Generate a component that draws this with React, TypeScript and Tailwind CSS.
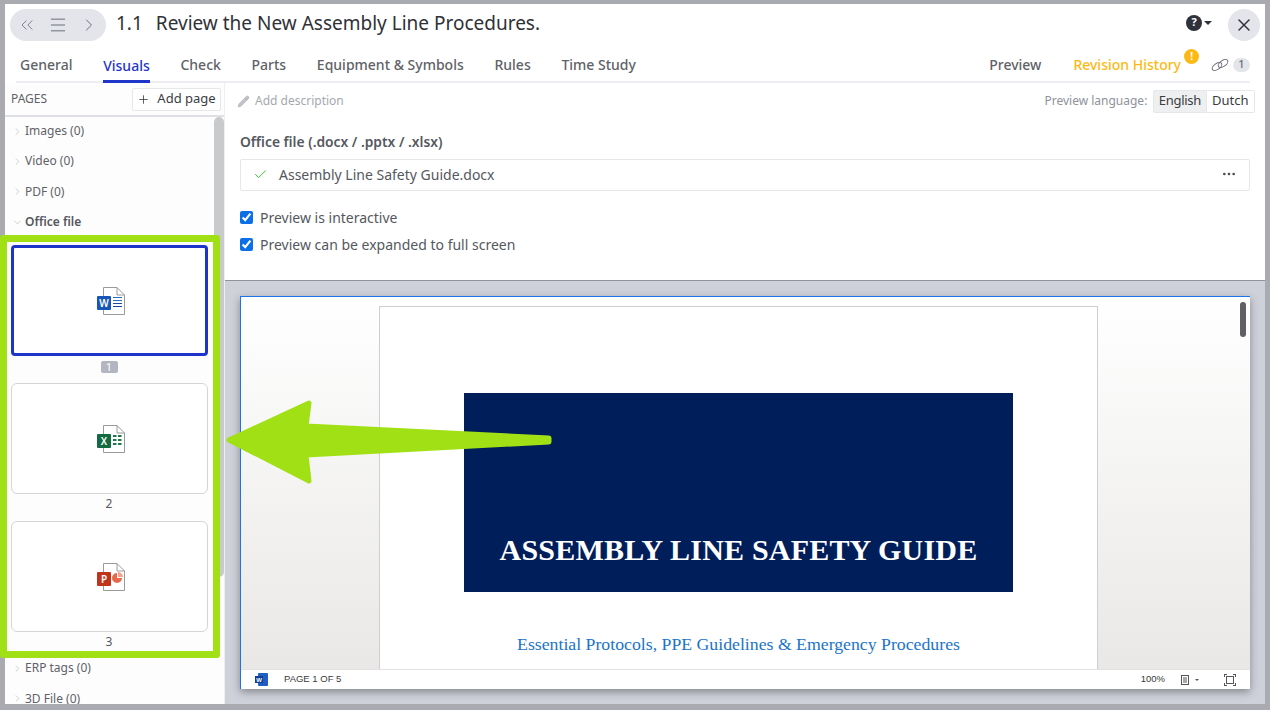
import { Check, ChevronDown, ChevronRight, ChevronsLeft, Menu, MoreHorizontal, Pencil, Plus, X } from "lucide-react";

const TABS = ["General", "Visuals", "Check", "Parts", "Equipment & Symbols", "Rules", "Time Study"];

function FileIcon({ color, letter, kind }: { color: string; letter: string; kind: "word" | "excel" | "ppt" }) {
  return (
    <svg width="30" height="30" viewBox="0 0 30 30" className="ml-[5px]">
      <path d="M6.5 1.5H20L27.5 9V28.5H6.5Z" fill="#fff" stroke="#9a9a9a" />
      <path d="M20 1.5V9H27.5" fill="none" stroke="#9a9a9a" />
      {kind === "word" && (
        <g stroke="#2b6cc4" strokeWidth="1">
          <path d="M16 11.5H25" />
          <path d="M16 14.5H25" />
          <path d="M16 17.5H25" stroke="#1c4a9c" />
          <path d="M16 20.5H25" stroke="#1c4a9c" />
        </g>
      )}
      {kind === "excel" && (
        <g fill="#1e7a4c">
          <rect x="16" y="11" width="3.5" height="2" />
          <rect x="21" y="11" width="3.5" height="2" />
          <rect x="16" y="15" width="3.5" height="2" />
          <rect x="21" y="15" width="3.5" height="2" />
          <rect x="16" y="19" width="3.5" height="2" />
          <rect x="21" y="19" width="3.5" height="2" />
        </g>
      )}
      {kind === "ppt" && (
        <g>
          <path d="M20 11A5 5 0 1 0 25 16H20Z" fill="#e8694a" />
          <path d="M21 10A5 5 0 0 1 26 15H21Z" fill="#f3a48f" />
        </g>
      )}
      <rect x="0" y="10" width="14" height="14" rx="1" fill={color} />
      <text x="7" y="21" textAnchor="middle" fontSize="10" fontWeight="600" fill="#fff" fontFamily="Noto Sans, sans-serif">
        {letter}
      </text>
    </svg>
  );
}

function TreeItem({ label, open, bold }: { label: string; open?: boolean; bold?: boolean }) {
  return (
    <div className="flex h-[30.3px] shrink-0 items-center">
      <span className="flex w-[20px] justify-center pl-[5px] text-[#c9cacd]">
        {open ? <ChevronDown size={11} /> : <ChevronRight size={11} />}
      </span>
      <span className={bold ? "text-[12px] font-semibold text-[#55585e]" : "text-[12px] text-[#5f6268]"}>{label}</span>
    </div>
  );
}

function Thumb({ active, n, children }: { active?: boolean; n: number; children: React.ReactNode }) {
  return (
    <div className="flex flex-col items-center">
      <div
        className={
          active
            ? "flex h-[111px] w-[197px] items-center justify-center rounded-[4px] border-[3px] border-[#1f35c9] bg-white"
            : "flex h-[111px] w-[197px] items-center justify-center rounded-[6px] border border-[#d4d5d8] bg-white"
        }
      >
        {children}
      </div>
      <div className="flex h-[27px] items-start pt-[1px]">
        {active ? (
          <span className="mt-[4px] flex h-[12px] w-[17px] items-center justify-center rounded-[2px] bg-[#b3b6c0] text-[11px] text-white">{n}</span>
        ) : (
          <span className="text-[12px] leading-[18px] text-[#55585e]">{n}</span>
        )}
      </div>
    </div>
  );
}

export default function App() {
  return (
    <div
      className="relative h-[710px] w-[1270px] overflow-hidden bg-[#a9abb0] pt-[4px] pr-[5px] pb-[6px] pl-[5px]"
      style={{ fontFamily: '"Noto Sans", sans-serif' }}
    >
      <div className="flex h-full flex-col bg-white">
        {/* title */}
        <div className="flex h-[40px] shrink-0 items-center pl-[5px] pr-[5px] pt-[2px]">
          <div className="flex h-[32px] w-[96px] items-center justify-between rounded-full bg-[#e3e5ea] px-[7px] text-[#6b6f78]">
            <ChevronsLeft size={20} strokeWidth={1} />
            <Menu size={20} strokeWidth={1.2} />
            <ChevronRight size={20} strokeWidth={1.2} />
          </div>
          <div className="mb-[3px] ml-[10px] text-[19px] leading-none text-[#2f3136]">
            1.1<span className="ml-[13px]">Review the New Assembly Line Procedures.</span>
          </div>
          <div className="ml-auto flex items-center">
            <span className="mb-[5px] flex h-[16px] w-[16px] items-center justify-center rounded-full bg-[#2f323a] text-[11px] font-bold text-white">?</span>
            <span className="mb-[5px] ml-[2px] h-0 w-0 border-x-[4px] border-t-[4px] border-x-transparent border-t-[#2f323a]" />
            <span className="ml-[16px] flex h-[32px] w-[32px] items-center justify-center rounded-full bg-[#e3e5ea] text-[#2f323a]">
              <X size={20} strokeWidth={1.8} />
            </span>
          </div>
        </div>

        {/* tabs */}
        <div className="ml-[11px] mr-[15px] flex h-[39px] shrink-0 items-stretch border-b-[2px] border-[#eceef1] text-[14px] font-medium text-[#5f6268]">
          <div className="flex gap-[30.7px] pl-[4px]">
            {TABS.map((t) => (
              <div
                key={t}
                className={
                  t === "Visuals"
                    ? "-mb-[2px] flex items-center border-b-[3px] border-[#1f35c9] pt-[7px] text-[#1f35c9]"
                    : "flex items-center pt-[4px]"
                }
              >
                {t}
              </div>
            ))}
          </div>
          <div className="relative ml-auto flex items-center pt-[4px]">
            <span>Preview</span>
            <span className="ml-[32px] text-[#fdb913]">Revision History</span>
            <span className="absolute left-[195px] top-[5px] flex h-[15px] w-[15px] items-center justify-center rounded-full bg-[#fdb913] text-[10px] font-bold text-white">!</span>
            <svg width="18" height="14" viewBox="0 0 18 14" fill="none" stroke="#6b6f78" strokeWidth="1" className="ml-[30px]">
              <ellipse cx="6" cy="8.5" rx="5.5" ry="3" transform="rotate(-35 6 8.5)" />
              <ellipse cx="12" cy="5.5" rx="5.5" ry="3" transform="rotate(-35 12 5.5)" />
            </svg>
            <span className="ml-[4px] flex h-[14px] w-[17px] items-center justify-center rounded-full bg-[#e3e5ea] text-[11px] text-[#6b6f78]">1</span>
          </div>
        </div>

        <div className="flex min-h-0 flex-1">
          {/* sidebar */}
          <div className="flex w-[220px] shrink-0 flex-col overflow-hidden border-r border-[#eeeff1] bg-[#fdfdfd]">
            <div className="flex h-[34px] shrink-0 items-center justify-between border-b-2 border-[#dfe0e3] pl-[6px] pr-[3px]">
              <span className="text-[12px] text-[#5f6268]">PAGES</span>
              <span className="flex h-[23px] w-[89px] items-center justify-center gap-[7px] rounded-[2px] border border-[#e6e7ea] bg-white text-[13px] text-[#3a3c42]">
                <Plus size={13} strokeWidth={1.5} />
                Add page
              </span>
            </div>
            <div className="flex min-h-0 flex-1">
              <div className="min-w-0 flex-1 -mt-[1px]">
                <TreeItem label="Images (0)" />
                <TreeItem label="Video (0)" />
                <TreeItem label="PDF (0)" />
                <TreeItem label="Office file" open bold />
                <div className="flex flex-col pl-[1px] pr-[2px] pt-[8px]">
                  <Thumb active n={1}>
                    <FileIcon color="#1a56b8" letter="W" kind="word" />
                  </Thumb>
                  <Thumb n={2}>
                    <FileIcon color="#146b3f" letter="X" kind="excel" />
                  </Thumb>
                  <Thumb n={3}>
                    <FileIcon color="#c2341a" letter="P" kind="ppt" />
                  </Thumb>
                </div>
                <div className="-mt-[6px]">
                  <TreeItem label="ERP tags (0)" />
                  <TreeItem label="3D File (0)" />
                </div>
              </div>
              <div className="w-[10px] shrink-0">
                <div className="h-[460px] w-[10px] rounded-[5px] bg-[#c9cacc]" />
              </div>
            </div>
          </div>

          {/* main */}
          <div className="flex min-w-0 flex-1 flex-col">
            <div className="h-[198px] shrink-0 border-b border-[#8f929a] pl-[15px] pr-[15px]">
              <div className="-mr-[5px] flex h-[36px] items-center justify-between">
                <span className="-ml-[3px] flex items-center gap-[5px] text-[12px] text-[#a5a8ae]">
                  <Pencil size={13} fill="#c2c4c9" strokeWidth={1} />
                  Add description
                </span>
                <span className="flex items-center">
                  <span className="mr-[6px] text-[12px] text-[#8f929a]">Preview language:</span>
                  <span className="flex h-[23px] items-center rounded-l-[2px] border border-[#e6e7ea] bg-[#eeeff0] px-[4.5px] pb-[1px] text-[13px] tracking-[-0.3px] text-[#3a3c42]">English</span>
                  <span className="flex h-[23px] items-center rounded-r-[2px] border border-l-0 border-[#e6e7ea] px-[5.5px] pb-[1px] text-[13px] text-[#3a3c42]">Dutch</span>
                </span>
              </div>
              <div className="mt-[13px] text-[13.8px] font-semibold leading-[20px] text-[#55585e]">Office file (.docx / .pptx / .xlsx)</div>
              <div className="mt-[7px] flex h-[32px] items-center rounded-[2px] border border-[#e6e7ea] pb-[2px] pl-[12px] pr-[12px] text-[14px] text-[#55585e]">
                <Check size={15} strokeWidth={1.5} className="text-[#22c922]" />
                <span className="ml-[11px]">Assembly Line Safety Guide.docx</span>
                <MoreHorizontal size={16} className="ml-auto text-[#4a4c52]" />
              </div>
              <label className="mt-[13px] flex h-[27px] items-center gap-[7px] text-[14px] text-[#55585e]">
                <input type="checkbox" defaultChecked className="h-[13px] w-[13px] accent-[#0b6fe8]" />
                Preview is interactive
              </label>
              <label className="flex h-[27px] items-center gap-[7px] text-[14px] text-[#55585e]">
                <input type="checkbox" defaultChecked className="h-[13px] w-[13px] accent-[#0b6fe8]" />
                Preview can be expanded to full screen
              </label>
            </div>

            {/* preview */}
            <div className="min-h-0 flex-1 bg-[#ced1da] px-[15px] pb-[15px] pt-[15px]">
              <div className="flex h-full flex-col border-l border-t border-[#1b74e8] shadow-[0_3px_8px_rgba(0,0,0,0.35)]">
                <div className="relative flex min-h-0 flex-1 justify-center bg-gradient-to-b from-white to-[#e9e8e6] pr-[14px] pt-[9px]">
                  <div className="flex w-[719px] flex-col items-center border border-b-0 border-[#cfcfcf] bg-white pt-[86px]">
                    <div className="flex h-[199px] w-[549px] items-end justify-center bg-[#001e5a] pb-[27px]">
                      <span
                        className="text-[30px] font-bold leading-none tracking-[0.2px] text-white"
                        style={{ fontFamily: '"Liberation Serif", serif' }}
                      >
                        ASSEMBLY LINE SAFETY GUIDE
                      </span>
                    </div>
                    <div className="mt-[44px] text-[17.75px] leading-none text-[#1b74c8]" style={{ fontFamily: '"Liberation Serif", serif' }}>
                      Essential Protocols, PPE Guidelines &amp; Emergency Procedures
                    </div>
                  </div>
                  <div className="absolute right-[4px] top-[5px] h-[35px] w-[6px] rounded-full bg-[#5f6063]" />
                </div>
                <div
                  className="flex h-[20px] shrink-0 items-center border-t border-[#e2e2e2] bg-white text-[9.5px] text-[#3a3a3a]"
                  style={{ fontFamily: '"Liberation Sans", sans-serif' }}
                >
                  <svg width="13" height="13" viewBox="0 0 13 13" className="ml-[14px]">
                    <rect x="3" y="0" width="10" height="13" rx="1" fill="#1f5fc0" />
                    <rect x="0" y="3" width="8" height="7" fill="#123f96" />
                    <text x="4" y="9" textAnchor="middle" fontSize="6" fill="#fff" fontWeight="700">
                      W
                    </text>
                  </svg>
                  <span className="ml-[16px]">PAGE 1 OF 5</span>
                  <span className="ml-auto">100%</span>
                  <svg width="20" height="12" viewBox="0 0 20 12" className="ml-[15px] text-[#555]">
                    <rect x="1.5" y="1.5" width="7" height="9" fill="none" stroke="currentColor" />
                    <path d="M3 4H7M3 6H7M3 8H7" stroke="currentColor" />
                    <path d="M15 5H19L17 7Z" fill="currentColor" />
                  </svg>
                  <svg width="12" height="12" viewBox="0 0 12 12" className="ml-[24px] mr-[14px] text-[#555]">
                    <rect x="2.5" y="2.5" width="7" height="7" fill="none" stroke="currentColor" />
                    <path d="M0 0H3V1H1V3H0ZM9 0H12V3H11V1H9ZM0 9H1V11H3V12H0ZM11 9H12V12H9V11H11Z" fill="currentColor" />
                  </svg>
                </div>
              </div>
            </div>
          </div>
        </div>
      </div>

      {/* annotation frame and arrow */}
      <div className="absolute left-0 top-[235px] h-[423px] w-[220px] rounded-[3px] border-[7px] border-[#a0e015]" />
      <svg className="absolute left-[225px] top-[398px]" width="330" height="88" viewBox="0 0 330 88">
        <path
          d="M4 42L84 5L81 28L324 40L324 44L81 57L84 83Z"
          fill="#a0e015"
          stroke="#a0e015"
          strokeWidth="5"
          strokeLinejoin="round"
        />
      </svg>
    </div>
  );
}
